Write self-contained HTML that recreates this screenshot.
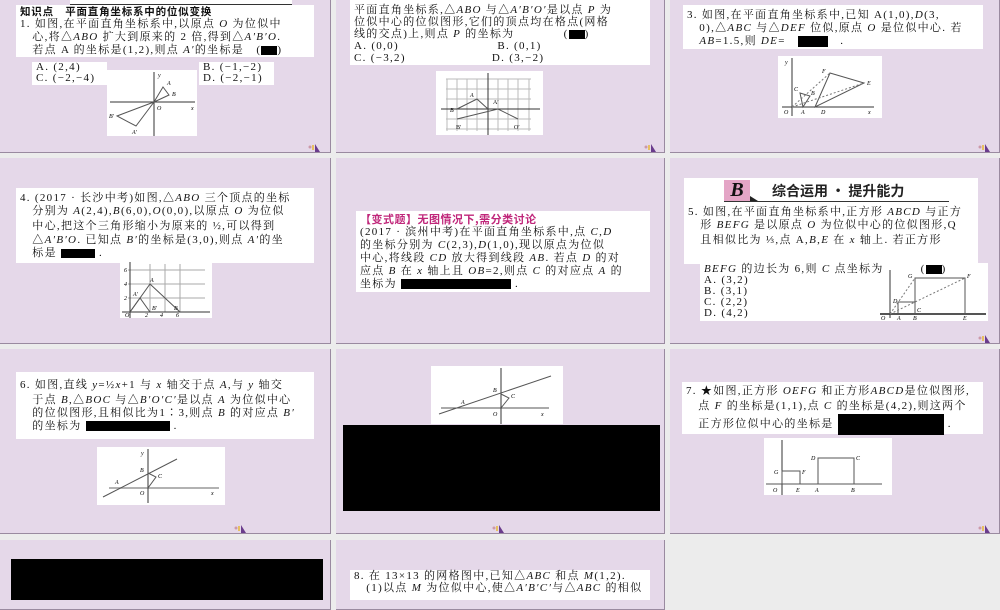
<!DOCTYPE html>
<html><head><meta charset="utf-8"><style>
*{margin:0;padding:0;box-sizing:border-box}
body{width:1000px;height:600px;background:#ececec;position:relative;overflow:hidden;font-family:"Liberation Serif","Noto Serif CJK SC","Noto Sans CJK SC",serif;color:#111}
.c{position:absolute;background:#e5d8e9;border-right:1px solid #9a8aa0;border-bottom:1px solid #9a8aa0}
.w{position:absolute;background:#fff}
.t{position:absolute;background:#fff;font-size:11px;letter-spacing:1.3px;white-space:nowrap;padding:0 4px}
.t div{height:13px;line-height:13px}
.k{position:absolute;background:#000}
.g{position:absolute;background:#fff}
.ic{position:absolute;width:14px;height:10px}
</style></head><body>
<div class="c" style="left:0;top:-30px;width:331px;height:183px"></div>
<div class="c" style="left:336px;top:-30px;width:329px;height:183px"></div>
<div class="c" style="left:670px;top:-30px;width:330px;height:183px"></div>
<div class="c" style="left:0;top:158px;width:331px;height:186px"></div>
<div class="c" style="left:336px;top:158px;width:329px;height:186px"></div>
<div class="c" style="left:670px;top:158px;width:330px;height:186px"></div>
<div class="c" style="left:0;top:349px;width:331px;height:185px"></div>
<div class="c" style="left:336px;top:349px;width:329px;height:185px"></div>
<div class="c" style="left:670px;top:349px;width:330px;height:185px"></div>
<div class="c" style="left:0;top:540px;width:331px;height:70px"></div>
<div class="c" style="left:336px;top:540px;width:329px;height:70px"></div>

<!-- cell 1 -->
<div class="w" style="left:70px;top:0;width:222px;height:5px;border-bottom:1px solid #333"></div>
<div class="t" style="left:16px;top:5px;width:298px;height:52px">
<div style="font-weight:bold;font-family:'Noto Sans CJK SC',sans-serif;font-size:10.5px;letter-spacing:0.8px">知识点　平面直角坐标系中的位似变换</div>
<div>1. 如图,在平面直角坐标系中,以原点 <i>O</i> 为位似中</div>
<div>　心,将△<i>ABO</i> 扩大到原来的 2 倍,得到△<i>A′B′O</i>.</div>
<div>　若点 A 的坐标是(1,2),则点 <i>A′</i>的坐标是　(<span style="display:inline-block;width:16px;height:9px;background:#000;vertical-align:middle"></span>)</div>
</div>
<div class="t" style="left:32px;top:62px;width:75px;height:23px"><div style="height:11px;line-height:11px">A. (2,4)</div><div style="height:11px;line-height:11px">C. (−2,−4)</div></div>
<div class="t" style="left:199px;top:62px;width:75px;height:23px"><div style="height:11px;line-height:11px">B. (−1,−2)</div><div style="height:11px;line-height:11px">D. (−2,−1)</div></div>
<svg class="g" style="left:107px;top:70px" width="90" height="66" font-size="6" font-style="italic">
<line x1="3" y1="32" x2="88" y2="32" stroke="#333"/><line x1="47" y1="2" x2="47" y2="66" stroke="#333"/>
<polyline points="47,32 56,17 62,25 47,32" fill="none" stroke="#555"/><polyline points="47,32 29,56 10,46 47,32" fill="none" stroke="#555"/>
<text x="60" y="15">A</text><text x="65" y="26">B</text><text x="2" y="48">B′</text><text x="25" y="64">A′</text><text x="50" y="40">O</text><text x="51" y="7">y</text><text x="84" y="40">x</text></svg>

<!-- cell 2 -->
<div class="t" style="left:350px;top:0;width:300px;height:65px">
<div style="height:4px"></div>
<div style="height:12px;line-height:12px">平面直角坐标系,△<i>ABO</i> 与△<i>A′B′O′</i>是以点 <i>P</i> 为</div>
<div style="height:12px;line-height:12px">位似中心的位似图形,它们的顶点均在格点(网格</div>
<div style="height:12px;line-height:12px">线的交点)上,则点 <i>P</i> 的坐标为　　　　(<span style="display:inline-block;width:16px;height:9px;background:#000;vertical-align:middle"></span>)</div>
<div style="height:12px;line-height:12px">A. (0,0)　　　　　　　　B. (0,1)</div>
<div style="height:12px;line-height:12px">C. (−3,2)　　　　　　　D. (3,−2)</div>
</div>
<svg class="g" style="left:436px;top:71px" width="107" height="64" font-size="6">
<g stroke="#bbb"><line x1="10" y1="8" x2="95" y2="8"/><line x1="10" y1="18" x2="95" y2="18"/><line x1="10" y1="28" x2="95" y2="28"/><line x1="10" y1="48" x2="95" y2="48"/><line x1="10" y1="58" x2="95" y2="58"/>
<line x1="11" y1="8" x2="11" y2="60"/><line x1="21" y1="8" x2="21" y2="60"/><line x1="31" y1="8" x2="31" y2="60"/><line x1="41" y1="8" x2="41" y2="60"/><line x1="62" y1="8" x2="62" y2="60"/><line x1="72" y1="8" x2="72" y2="60"/><line x1="82" y1="8" x2="82" y2="60"/><line x1="93" y1="8" x2="93" y2="60"/></g>
<line x1="5" y1="38" x2="104" y2="38" stroke="#333"/><line x1="52" y1="2" x2="52" y2="64" stroke="#333"/>
<polyline points="21,38 41,28 52,38" fill="none" stroke="#555"/><polyline points="21,48 62,38 82,48" fill="none" stroke="#555"/>
<text x="34" y="26" font-style="italic">A</text><text x="14" y="41" font-style="italic">B</text><text x="20" y="58">B′</text><text x="78" y="58">O′</text><text x="57" y="33">A′</text></svg>

<!-- cell 3 -->
<div class="t" style="left:683px;top:5px;width:300px;height:44px">
<div style="height:4px"></div>
<div>3. 如图,在平面直角坐标系中,已知 A(1,0),<i>D</i>(3,</div>
<div>　0),△<i>ABC</i> 与△<i>DEF</i> 位似,原点 <i>O</i> 是位似中心. 若</div>
<div>　<i>AB</i>=1.5,则 <i>DE</i>=　<span style="display:inline-block;width:30px;height:11px;background:#000;vertical-align:middle"></span>　.</div>
</div>
<svg class="g" style="left:778px;top:56px" width="104" height="62" font-size="6" font-style="italic">
<line x1="4" y1="51" x2="96" y2="51" stroke="#333"/><line x1="14" y1="2" x2="14" y2="60" stroke="#333"/>
<polygon points="37,51 52,17 86,27" fill="none" stroke="#555"/><polygon points="25,51 22,37 32,40" fill="none" stroke="#555"/>
<g stroke="#777" stroke-dasharray="2,2"><line x1="14" y1="51" x2="52" y2="17"/><line x1="14" y1="51" x2="86" y2="27"/></g>
<text x="6" y="58">O</text><text x="23" y="58">A</text><text x="43" y="58">D</text><text x="90" y="58">x</text><text x="44" y="17">F</text><text x="89" y="29">E</text><text x="16" y="35">C</text><text x="33" y="39">B</text><text x="7" y="8">y</text></svg>

<!-- cell 4 -->
<div class="t" style="left:16px;top:188px;width:298px;height:75px;padding-top:4px">
<div>4. (2017 · 长沙中考)如图,△<i>ABO</i> 三个顶点的坐标</div>
<div>　分别为 <i>A</i>(2,4),<i>B</i>(6,0),<i>O</i>(0,0),以原点 <i>O</i> 为位似</div>
<div style="height:16px;line-height:16px">　中心,把这个三角形缩小为原来的 ½,可以得到</div>
<div>　△<i>A′B′O</i>. 已知点 <i>B′</i>的坐标是(3,0),则点 <i>A′</i>的坐</div>
<div>　标是 <span style="display:inline-block;width:34px;height:9px;background:#000;vertical-align:middle"></span> .</div>
</div>
<svg class="g" style="left:120px;top:262px" width="92" height="56" font-size="6" font-style="italic">
<g stroke="#aaa"><line x1="8" y1="8" x2="85" y2="8"/><line x1="8" y1="22" x2="85" y2="22"/><line x1="8" y1="36" x2="85" y2="36"/><line x1="30" y1="2" x2="30" y2="50"/><line x1="45" y1="2" x2="45" y2="50"/><line x1="60" y1="2" x2="60" y2="50"/></g>
<line x1="2" y1="50" x2="90" y2="50" stroke="#333"/><line x1="10" y1="0" x2="10" y2="56" stroke="#333"/>
<polyline points="10,50 30,22 60,50" fill="none" stroke="#555"/><polyline points="10,50 20,36 30,50" fill="none" stroke="#555"/>
<text x="5" y="55">O</text><text x="25" y="55">2</text><text x="40" y="55">4</text><text x="56" y="55">6</text><text x="4" y="10">6</text><text x="4" y="24">4</text><text x="4" y="38">2</text><text x="30" y="20">A</text><text x="13" y="34">A′</text><text x="32" y="48">B′</text><text x="54" y="48">B</text></svg>

<!-- cell 5 -->
<div class="t" style="left:356px;top:211px;width:294px;height:81px;padding-top:2px">
<div style="color:#c0267a;font-weight:bold;font-family:'Noto Sans CJK SC',sans-serif;letter-spacing:0.5px">【变式题】无图情况下,需分类讨论</div>
<div>(2017 · 滨州中考)在平面直角坐标系中,点 <i>C</i>,<i>D</i></div>
<div>的坐标分别为 <i>C</i>(2,3),<i>D</i>(1,0),现以原点为位似</div>
<div>中心,将线段 <i>CD</i> 放大得到线段 <i>AB</i>. 若点 <i>D</i> 的对</div>
<div>应点 <i>B</i> 在 <i>x</i> 轴上且 <i>OB</i>=2,则点 <i>C</i> 的对应点 <i>A</i> 的</div>
<div>坐标为 <span style="display:inline-block;width:110px;height:10px;background:#000;vertical-align:middle"></span> .</div>
</div>

<!-- cell 6 -->
<div class="w" style="left:684px;top:178px;width:294px;height:28px"></div>
<div style="position:absolute;left:724px;top:180px;width:26px;height:21px;background:#e4a5c6;font:bold italic 20px 'Liberation Serif',serif;line-height:21px;text-align:center">B</div>
<div style="position:absolute;left:750px;top:196px;width:0;height:0;border-left:8px solid #222;border-top:5px solid transparent"></div>
<div style="position:absolute;left:724px;top:201px;width:225px;height:1px;background:#333"></div>
<div style="position:absolute;left:772px;top:181px;font:bold 14px 'Noto Sans CJK SC',sans-serif;color:#222">综合运用 · 提升能力</div>
<div class="t" style="left:684px;top:206px;width:294px;height:58px">
<div>5. 如图,在平面直角坐标系中,正方形 <i>ABCD</i> 与正方</div>
<div>　形 <i>BEFG</i> 是以原点 <i>O</i> 为位似中心的位似图形,Q</div>
<div style="height:16px;line-height:16px">　且相似比为 ⅓,点 A,<i>B</i>,<i>E</i> 在 <i>x</i> 轴上. 若正方形</div>
</div>
<div class="t" style="left:700px;top:263px;width:288px;height:58px">
<div style="height:12px;line-height:12px"><i>BEFG</i> 的边长为 6,则 <i>C</i> 点坐标为　　　(<span style="display:inline-block;width:16px;height:9px;background:#000;vertical-align:middle"></span>)</div>
<div style="height:11px;line-height:11px">A. (3,2)</div><div style="height:11px;line-height:11px">B. (3,1)</div><div style="height:11px;line-height:11px">C. (2,2)</div><div style="height:11px;line-height:11px">D. (4,2)</div>
</div>
<svg style="position:absolute;left:880px;top:268px" width="108" height="52" font-size="6" font-style="italic">
<line x1="0" y1="46" x2="106" y2="46" stroke="#555" stroke-width="2"/><line x1="10" y1="2" x2="10" y2="50" stroke="#333"/>
<rect x="35" y="10" width="50" height="36" fill="none" stroke="#555"/><rect x="18" y="34" width="17" height="12" fill="none" stroke="#555"/>
<g stroke="#777" stroke-dasharray="2,2"><line x1="10" y1="46" x2="35" y2="10"/><line x1="10" y1="46" x2="85" y2="10"/></g>
<text x="1" y="52">O</text><text x="17" y="52">A</text><text x="33" y="52">B</text><text x="83" y="52">E</text><text x="28" y="10">G</text><text x="87" y="10">F</text><text x="13" y="35">D</text><text x="37" y="44">C</text></svg>

<!-- cell 7 -->
<div class="t" style="left:16px;top:372px;width:298px;height:67px;padding-top:4px">
<div style="height:18px;line-height:18px">6. 如图,直线 <i>y</i>=½<i>x</i>+1 与 <i>x</i> 轴交于点 <i>A</i>,与 <i>y</i> 轴交</div>
<div>　于点 <i>B</i>,△<i>BOC</i> 与△<i>B′O′C′</i>是以点 <i>A</i> 为位似中心</div>
<div>　的位似图形,且相似比为1∶3,则点 <i>B</i> 的对应点 <i>B′</i></div>
<div>　的坐标为 <span style="display:inline-block;width:84px;height:10px;background:#000;vertical-align:middle"></span> .</div>
</div>
<svg class="g" style="left:97px;top:447px" width="128" height="58" font-size="6" font-style="italic">
<line x1="12" y1="41" x2="122" y2="41" stroke="#999" stroke-width="1.5"/><line x1="51" y1="2" x2="51" y2="56" stroke="#333"/>
<line x1="6" y1="50" x2="80" y2="12" stroke="#555"/><polyline points="51,26 59,30 51,41" fill="none" stroke="#555"/>
<text x="18" y="37">A</text><text x="43" y="25">B</text><text x="61" y="31">C</text><text x="43" y="48">O</text><text x="114" y="48">x</text><text x="44" y="8">y</text></svg>

<!-- cell 8 -->
<svg class="g" style="left:431px;top:366px" width="132" height="58" font-size="6" font-style="italic">
<line x1="10" y1="42" x2="118" y2="42" stroke="#555"/><line x1="70" y1="2" x2="70" y2="58" stroke="#333"/>
<line x1="8" y1="48" x2="120" y2="10" stroke="#555"/><polyline points="70,28 78,32 70,42" fill="none" stroke="#555"/>
<text x="30" y="38">A</text><text x="62" y="26">B</text><text x="80" y="32">C</text><text x="62" y="50">O</text><text x="110" y="50">x</text></svg>
<div class="k" style="left:343px;top:425px;width:317px;height:86px"></div>

<!-- cell 9 -->
<div class="t" style="left:682px;top:382px;width:301px;height:52px;padding-top:2px">
<div style="height:15px;line-height:15px">7. ★如图,正方形 <i>OEFG</i> 和正方形<i>ABCD</i>是位似图形,</div>
<div style="height:15px;line-height:15px">　点 <i>F</i> 的坐标是(1,1),点 <i>C</i> 的坐标是(4,2),则这两个</div>
<div style="height:18px;line-height:18px">　正方形位似中心的坐标是 <span style="display:inline-block;width:106px;height:21px;background:#000;vertical-align:middle"></span> .</div>
</div>
<svg class="g" style="left:764px;top:438px" width="128" height="57" font-size="6" font-style="italic">
<line x1="2" y1="46" x2="118" y2="46" stroke="#555"/><line x1="18" y1="2" x2="18" y2="57" stroke="#333"/>
<rect x="18" y="33" width="18" height="13" fill="none" stroke="#555"/><rect x="54" y="20" width="36" height="26" fill="none" stroke="#555"/>
<text x="9" y="54">O</text><text x="32" y="54">E</text><text x="51" y="54">A</text><text x="87" y="54">B</text><text x="10" y="36">G</text><text x="38" y="36">F</text><text x="47" y="22">D</text><text x="92" y="22">C</text></svg>

<!-- row 4 -->
<div class="k" style="left:11px;top:559px;width:312px;height:41px"></div>
<div class="t" style="left:350px;top:570px;width:300px;height:30px">
<div style="height:12px;line-height:12px">8. 在 13×13 的网格图中,已知△<i>ABC</i> 和点 <i>M</i>(1,2).</div>
<div style="height:12px;line-height:12px">　(1)以点 <i>M</i> 为位似中心,使△<i>A′B′C′</i>与△<i>ABC</i> 的相似</div>
</div>

<svg class="ic" style="left:306px;top:142px"><circle cx="4" cy="5" r="1.5" fill="#c9a"/><rect x="6" y="3" width="2" height="5" fill="#e8c060"/><path d="M9 2 L14 10 L9 10Z" fill="#6a3c8c"/></svg>
<svg class="ic" style="left:642px;top:142px"><circle cx="4" cy="5" r="1.5" fill="#c9a"/><rect x="6" y="3" width="2" height="5" fill="#e8c060"/><path d="M9 2 L14 10 L9 10Z" fill="#6a3c8c"/></svg>
<svg class="ic" style="left:976px;top:142px"><circle cx="4" cy="5" r="1.5" fill="#c9a"/><rect x="6" y="3" width="2" height="5" fill="#e8c060"/><path d="M9 2 L14 10 L9 10Z" fill="#6a3c8c"/></svg>
<svg class="ic" style="left:976px;top:333px"><circle cx="4" cy="5" r="1.5" fill="#c9a"/><rect x="6" y="3" width="2" height="5" fill="#e8c060"/><path d="M9 2 L14 10 L9 10Z" fill="#6a3c8c"/></svg>
<svg class="ic" style="left:232px;top:523px"><circle cx="4" cy="5" r="1.5" fill="#c9a"/><rect x="6" y="3" width="2" height="5" fill="#e8c060"/><path d="M9 2 L14 10 L9 10Z" fill="#6a3c8c"/></svg>
<svg class="ic" style="left:490px;top:523px"><circle cx="4" cy="5" r="1.5" fill="#c9a"/><rect x="6" y="3" width="2" height="5" fill="#e8c060"/><path d="M9 2 L14 10 L9 10Z" fill="#6a3c8c"/></svg>
<svg class="ic" style="left:976px;top:523px"><circle cx="4" cy="5" r="1.5" fill="#c9a"/><rect x="6" y="3" width="2" height="5" fill="#e8c060"/><path d="M9 2 L14 10 L9 10Z" fill="#6a3c8c"/></svg>
</body></html>
